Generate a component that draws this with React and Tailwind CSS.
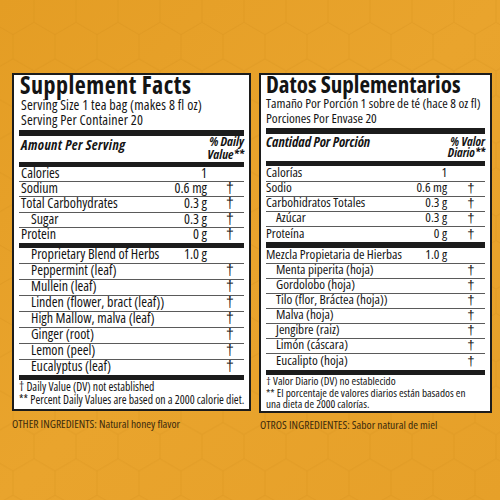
import React from "react";

const leftNutrients = [
  { name: "Calories", value: "1", dv: "", h: "h-[15px]" },
  { name: "Sodium", value: "0.6 mg", dv: "†", h: "h-[15px]" },
  { name: "Total Carbohydrates", value: "0.3 g", dv: "†", h: "h-[16px]" },
  { name: "Sugar", value: "0.3 g", dv: "†", indent: true, h: "h-[15px]" },
  { name: "Protein", value: "0 g", dv: "†", h: "h-[15px]", last: true },
];

const leftHerbs = [
  { name: "Proprietary Blend of Herbs", value: "1.0 g", dv: "", indent: true, h: "h-[16px]" },
  { name: "Peppermint (leaf)", dv: "†", indent: true, h: "h-[16px]" },
  { name: "Mullein (leaf)", dv: "†", indent: true, h: "h-[16px]" },
  { name: "Linden (flower, bract (leaf))", dv: "†", indent: true, h: "h-[16px]" },
  { name: "High Mallow, malva (leaf)", dv: "†", indent: true, h: "h-[16px]" },
  { name: "Ginger (root)", dv: "†", indent: true, h: "h-[16px]" },
  { name: "Lemon (peel)", dv: "†", indent: true, h: "h-[16px]" },
  { name: "Eucalyptus (leaf)", dv: "†", indent: true, h: "h-[15px]", last: true },
];

const rightNutrients = [
  { name: "Calorías", value: "1", dv: "", h: "h-[16px]" },
  { name: "Sodio", value: "0.6 mg", dv: "†", h: "h-[15px]" },
  { name: "Carbohidratos Totales", value: "0.3 g", dv: "†", h: "h-[15px]" },
  { name: "Azúcar", value: "0.3 g", dv: "†", indent: true, h: "h-[15px]" },
  { name: "Proteína", value: "0 g", dv: "†", h: "h-[15px]", last: true },
];

const rightHerbs = [
  { name: "Mezcla Propietaria de Hierbas", value: "1.0 g", dv: "", h: "h-[16px]" },
  { name: "Menta piperita (hoja)", dv: "†", indent: true, h: "h-[15px]" },
  { name: "Gordolobo (hoja)", dv: "†", indent: true, h: "h-[15px]" },
  { name: "Tilo (flor, Bráctea (hoja))", dv: "†", indent: true, h: "h-[15px]" },
  { name: "Malva (hoja)", dv: "†", indent: true, h: "h-[15px]" },
  { name: "Jengibre (raiz)", dv: "†", indent: true, h: "h-[15px]" },
  { name: "Limón (cáscara)", dv: "†", indent: true, h: "h-[15px]" },
  { name: "Eucalipto (hoja)", dv: "†", indent: true, h: "h-[16px]", last: true },
];

// side: "l" for the english panel, "r" for the spanish one
const Row = ({ row, side }) => {
  const pad = side === "l" ? (row.indent ? "pl-[12px]" : "pl-[2px]") : row.indent ? "pl-[10px]" : "pl-0";
  return (
    <div
      className={`flex items-center pb-[3px] ${row.h} ${row.last ? "" : "border-b border-[#5a5a5a]"}`}
    >
      <span className={`flex-1 whitespace-nowrap ${pad}`}>{row.name}</span>
      <span className={`text-right whitespace-nowrap ${side === "l" ? "pr-[9px]" : "pr-[10px]"}`}>
        {row.value}
      </span>
      <span className="w-[28px] text-center font-['Liberation_Sans']">{row.dv}</span>
    </div>
  );
};

const Honeycomb = () => (
  <svg className="absolute inset-0" width="500" height="500">
    <defs>
      <pattern id="hex" x="-8" y="-14" width="42" height="72.75" patternUnits="userSpaceOnUse">
        <path
          d="M21 0 L42 12.12 L42 36.37 L21 48.5 L0 36.37 L0 12.12 Z M21 48.5 L21 72.75"
          fill="none"
          stroke="#c98510"
          strokeOpacity="0.22"
          strokeWidth="1"
        />
      </pattern>
    </defs>
    <rect width="500" height="500" fill="url(#hex)" />
  </svg>
);

export default function App() {
  return (
    <div className="relative w-[500px] h-[500px] overflow-hidden bg-gradient-to-br from-[#e49d24] via-[#e9a42d] to-[#e6a029] text-[#141414] font-['Open_Sans',sans-serif] [font-stretch:75%]">
      <Honeycomb />
      <div className="relative flex gap-[8px] pt-[73px] pl-[12px]">
        {/* english */}
        <div className="w-[239px]">
          <div className="bg-white border-2 border-[#1c1c1c] px-[5px] pb-[3px]">
            <div className="h-[22px] leading-[20px] text-[24px] font-bold pl-[1px] tracking-[0.5px] whitespace-nowrap">
              Supplement Facts
            </div>
            <div className="text-[14px] leading-[15px] pl-[2px] tracking-[0.15px]">
              <div className="whitespace-nowrap">Serving Size 1 tea bag (makes 8 fl oz)</div>
              <div>Serving Per Container 20</div>
            </div>
            <div className="mt-[3px] h-[6px] bg-[#1c1c1c]" />
            <div className="h-[26px] flex justify-between font-bold italic">
              <span className="pt-[2px] pl-[2px] text-[14px] leading-[14px] tracking-[0.4px]">Amount Per Serving</span>
              <span className="-mt-[1px] text-right text-[13px] leading-[12.5px]">
                % Daily
                <br />
                Value**
              </span>
            </div>
            <div className="h-[5px] bg-[#1c1c1c]" />
            <div className="text-[14px] leading-[14px]">
              {leftNutrients.map((r) => (
                <Row key={r.name} row={r} side="l" />
              ))}
              <div className="h-[5px] bg-[#1c1c1c]" />
              {leftHerbs.map((r) => (
                <Row key={r.name} row={r} side="l" />
              ))}
            </div>
            <div className="h-[5px] bg-[#1c1c1c]" />
            <div className="text-[11.7px] leading-[13px]">
              <div>† Daily Value (DV) not established</div>
              <div className="whitespace-nowrap">** Percent Daily Values are based on a 2000 calorie diet.</div>
            </div>
          </div>
          <div className="mt-[6px] text-[11.5px] leading-[13px] text-[#3b2a0c] whitespace-nowrap">
            OTHER INGREDIENTS: Natural honey flavor
          </div>
        </div>

        {/* spanish */}
        <div className="w-[233px]">
          <div className="bg-white border-2 border-[#1c1c1c] px-[5px] pb-[1px]">
            <div className="h-[21px] leading-[18px] text-[23px] font-bold whitespace-nowrap">
              Datos Suplementarios
            </div>
            <div className="text-[13.3px] leading-[15px]">
              <div className="whitespace-nowrap">Tamaño Por Porción 1 sobre de té (hace 8 oz fl)</div>
              <div>Porciones Por Envase 20</div>
            </div>
            <div className="mt-[2px] h-[6px] bg-[#1c1c1c]" />
            <div className="h-[27px] flex justify-between font-bold italic pt-[2px] leading-[11px]">
              <span className="text-[14px]">Cantidad Por Porción</span>
              <span className="text-right text-[12.5px]">
                % Valor
                <br />
                Diario**
              </span>
            </div>
            <div className="h-[5px] bg-[#1c1c1c]" />
            <div className="text-[13.2px] leading-[13px]">
              {rightNutrients.map((r) => (
                <Row key={r.name} row={r} side="r" />
              ))}
              <div className="h-[6px] bg-[#1c1c1c]" />
              {rightHerbs.map((r) => (
                <Row key={r.name} row={r} side="r" />
              ))}
            </div>
            <div className="h-[5px] bg-[#1c1c1c]" />
            <div className="text-[11.2px] leading-[11.5px] whitespace-nowrap">
              <div>† Valor Diario (DV) no establecido</div>
              <div>** El porcentaje de valores diarios están basados en</div>
              <div>una dieta de 2000 calorías.</div>
            </div>
          </div>
          <div className="mt-[5px] pl-[1px] text-[11.5px] leading-[13px] text-[#3b2a0c] whitespace-nowrap">
            OTROS INGREDIENTES: Sabor natural de miel
          </div>
        </div>
      </div>
    </div>
  );
}
